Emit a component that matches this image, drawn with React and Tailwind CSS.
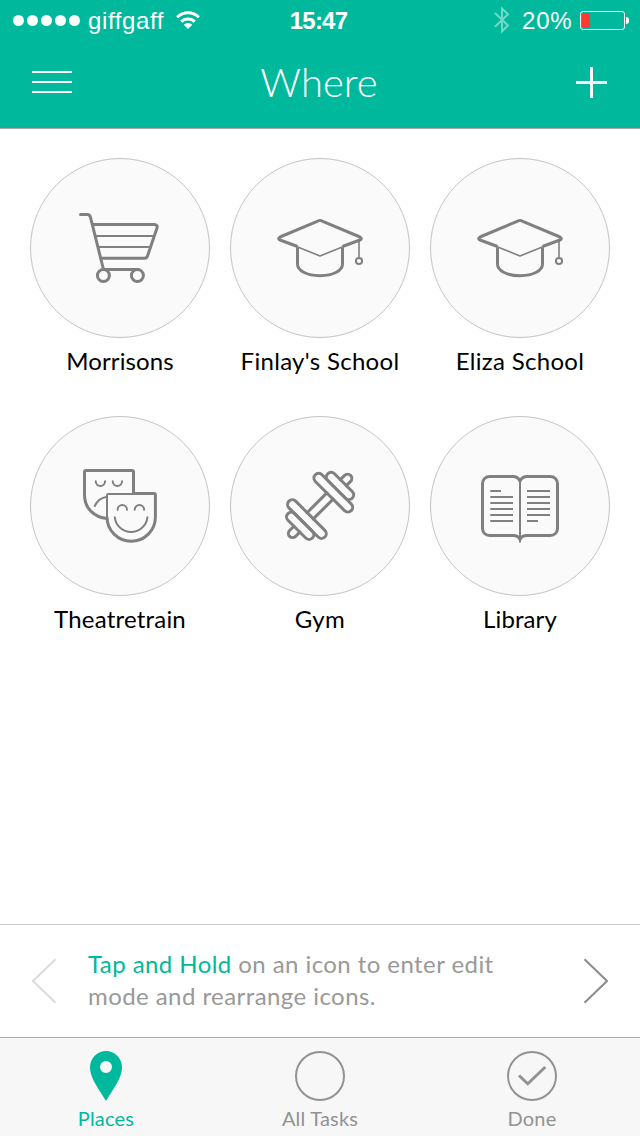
const places = [
	{ name: "Morrisons", icon: CartIcon, spacing: "tracking-[0.1px]" },
	{ name: "Finlay's School", icon: CapIcon, spacing: "tracking-[0.3px]" },
	{ name: "Eliza School", icon: CapIcon, spacing: "tracking-[0.3px]" },
	{ name: "Theatretrain", icon: MasksIcon, spacing: "tracking-[0.2px]" },
	{ name: "Gym", icon: DumbbellIcon, spacing: "tracking-[0.4px]" },
	{ name: "Library", icon: BookIcon, spacing: "tracking-[0.1px]" },
];

export default function App() {
	return (
		<div className="w-[640px] h-[1136px] flex flex-col overflow-hidden bg-white font-['Lato',sans-serif]">
			<header className="h-[129px] shrink-0 bg-[#00b99c] border-b border-[#a7aaa9] text-white">
				<StatusBar/>
				<NavBar/>
			</header>
			<main className="flex-1 px-[30px] pt-[29px]">
				<div className="grid grid-cols-3 gap-x-5">
					{places.map(place => <Place key={place.name} {...place}/>)}
				</div>
			</main>
			<Tip/>
			<TabBar/>
		</div>
	);
}

function StatusBar() {
	return (
		<div className="h-10 grid grid-cols-3 items-center pl-[13px] pr-[11px] font-['Liberation_Sans',sans-serif] text-2xl leading-10 whitespace-nowrap">
			<div className="flex items-center">
				<div className="flex gap-[3px]">
					{[1, 2, 3, 4, 5].map(n => <span key={n} className="size-[11px] rounded-full bg-white"/>)}
				</div>
				<span className="ml-[8px] w-[76px] pt-0.5 leading-[38px] tracking-[0.6px]">giffgaff</span>
				<svg className="ml-3 size-6" viewBox="0 0 24 24" fill="none" stroke="#fff" strokeWidth="3">
					<path d="M1.200 9.200a15.400 15.400 0 0 1 21.600 0"/>
					<path d="M5.200 13.700a9.800 9.800 0 0 1 13.600 0"/>
					<path d="M12 21l-4.300-4.300a6.200 6.200 0 0 1 8.600 0z" fill="#fff" stroke="none"/>
				</svg>
			</div>
			<span className="pr-[5px] pt-0.5 leading-[38px] text-center font-bold tracking-[-0.8px]">15:47</span>
			<div className="flex items-center justify-end">
				<svg className="w-4 h-7" viewBox="0 0 16 28" fill="none" stroke="#fff" strokeOpacity="0.45" strokeWidth="2">
					<path d="M1 7l13 12.500-6 5.800V2.500l6 5.800L1 20.800"/>
				</svg>
				<span className="ml-3 w-[51px] pt-0.5 leading-[38px] tracking-[0.8px]">20%</span>
				<div className="ml-[7px] w-[45px] h-[19px] p-px border border-white rounded-[3px]">
					<div className="w-[8px] h-full bg-[#ff3b30] rounded-l-[1px]"/>
				</div>
				<span className="ml-px w-[3px] h-[7px] rounded-r-full bg-white"/>
			</div>
		</div>
	);
}

function NavBar() {
	return (
		<div className="h-[88px] px-8 grid grid-cols-3 items-center">
			<button className="w-10 flex flex-col gap-2 -mt-1">
				<span className="h-0.5 bg-white"/>
				<span className="h-0.5 bg-white"/>
				<span className="h-0.5 bg-white"/>
			</button>
			<h1 className="pr-0.5 text-center text-[40px] leading-[44px] font-light -mt-1">Where</h1>
			<svg className="justify-self-end mr-px -mt-[3px] size-[31px]" viewBox="0 0 31 31" stroke="#fff" strokeWidth="3">
				<path d="M0 15.500h31M15.500 0v31"/>
			</svg>
		</div>
	);
}

function Place({ name, icon: Icon, spacing }) {
	return (
		<div className="h-[258px] flex flex-col items-center">
			<div className="size-[180px] rounded-full border border-[#c4c4c4] bg-[#fafafa]">
				<Icon/>
			</div>
			<span className={`mt-[7px] text-2xl leading-8 text-black whitespace-nowrap ${spacing}`}>{name}</span>
		</div>
	);
}

function PlaceSvg({ children }) {
	return (
		<svg
			className="-m-px size-[180px]"
			viewBox="0 0 180 180"
			fill="none"
			stroke="#808080"
			strokeWidth="3"
			strokeLinecap="round"
			strokeLinejoin="round"
		>
			{children}
		</svg>
	);
}

function CartIcon() {
	return (
		<PlaceSvg>
			<path d="M50.500 56.500h7c1.700 0 2.500 1 3 2.900l13 52.100h34.800"/>
			<path d="M62.500 66.500h62c2 0 3.200 1.500 2.500 3.400l-9.400 27.900c-.6 1.800-1.300 2.500-3 2.500H71"/>
			<path d="M66 78h58M68.700 89h51.500" strokeWidth="2"/>
			<circle cx="73.400" cy="117.500" r="6" fill="#fafafa"/>
			<circle cx="107.400" cy="117.500" r="6" fill="#fafafa"/>
		</PlaceSvg>
	);
}

function CapIcon() {
	return (
		<PlaceSvg>
			<path d="M67.500 89.500v16.500c0 6.500 9 11.700 22.500 11.700s22.500-5.200 22.500-11.700V89.500" strokeLinecap="butt"/>
			<path d="M67.500 88.500L50 82c-1.700-.7-1.700-2.200 0-3l39-16.400q1-.4 2 0L130 79c1.700.8 1.700 2.300 0 3l-17.500 6.500" strokeLinecap="butt"/>
			<path d="M66.500 88.500L90 98l23.500-9.500M129 83v16.500" strokeWidth="1.600" strokeLinecap="butt"/>
			<circle cx="129" cy="103" r="3.100" strokeWidth="2"/>
		</PlaceSvg>
	);
}

function MasksIcon() {
	return (
		<PlaceSvg>
			<path d="M103.500 77V55.800q0-1.300-1.400-1.300H56q-1.500 0-1.500 1.500V79c0 13.500 10 22.300 22.500 23.600" strokeLinecap="butt"/>
			<path d="M65.700 65.300a4.700 4.700 0 0 0 9.400 0M82.700 65.300a4.700 4.700 0 0 0 9.400 0M64.700 90c2.300-5 7-8.500 12.300-9.300" strokeWidth="2"/>
			<path d="M104 77.500h20q1.400 0 1.400 1.400V101a24.200 24.200 0 0 1-48.400 0" strokeLinecap="butt"/>
			<path d="M105 78H78.200q-1.200 0-1.200 1.200V102" strokeWidth="2"/>
			<path d="M87.600 93.700a4.700 4.700 0 0 1 9.400 0M104.700 93.700a4.700 4.700 0 0 1 9.400 0M84.800 101.300a16.400 16.400 0 0 0 32.600 0" strokeWidth="2"/>
		</PlaceSvg>
	);
}

function DumbbellIcon() {
	return (
		<PlaceSvg>
			<g transform="translate(90.100 89.900) rotate(-45)">
				<path d="M-14 -4.400h28M-14 4.400h28"/>
				<path d="M32.900 -4.200h6a4.200 4.200 0 0 1 0 8.400h-6M-32.900 -4.200h-6a4.200 4.200 0 0 0 0 8.400h6"/>
				<rect x="23.400" y="-17.300" width="9.500" height="34.600" rx="4.750"/>
				<rect x="-32.900" y="-17.300" width="9.500" height="34.600" rx="4.750"/>
				<rect x="13.900" y="-25.400" width="9.500" height="50.800" rx="4.750"/>
				<rect x="-23.400" y="-25.400" width="9.500" height="50.800" rx="4.750"/>
			</g>
		</PlaceSvg>
	);
}

function BookIcon() {
	return (
		<PlaceSvg>
			<path d="M90 65c-1.500-3-3.500-4.500-7-4.500H59.500a7 7 0 0 0-7 7v45a7 7 0 0 0 7 7H83c3.500 0 6 1.500 7 4 1-2.500 3.500-4 7-4h23.500a7 7 0 0 0 7-7v-45a7 7 0 0 0-7-7H97c-3.500 0-5.500 1.500-7 4.500z"/>
			<path d="M90 64v62.500" strokeWidth="2" strokeLinecap="butt"/>
			<path
				d="M60.300 75h10.700M60.300 81H83M60.300 87H83M60.300 93H83M60.300 99H83M60.300 105H83M97 75h23M97 81h23M97 87h23M97 93h23M97 99h23M97 105h11"
				strokeWidth="2"
				strokeLinecap="butt"
			/>
		</PlaceSvg>
	);
}

function Tip() {
	return (
		<section className="h-[113px] shrink-0 px-8 border-t border-[#c8c8c8] flex items-center">
			<svg className="w-6 h-[46px]" viewBox="0 0 24 46" fill="none" stroke="#dcdcdc" strokeWidth="2">
				<path d="M23.500 1.300L1 23l22.500 21.700"/>
			</svg>
			<p className="ml-8 flex-1 pb-0.5 text-2xl leading-8 tracking-[0.43px] text-[#999] whitespace-nowrap">
				<span className="text-[#00b99c]">Tap and Hold</span> on an icon to enter edit
				<br/>
				mode and rearrange icons.
			</p>
			<svg className="w-6 h-[46px]" viewBox="0 0 24 46" fill="none" stroke="#8c8c8c" strokeWidth="2">
				<path d="M.5 1.300L23 23 .5 44.700"/>
			</svg>
		</section>
	);
}

function TabBar() {
	return (
		<nav className="h-[99px] shrink-0 pt-[13px] border-t border-[#acacac] bg-[#f7f7f7] text-[#929292] text-xl leading-6 grid grid-cols-[212px_216px_208px]">
			<div className="flex flex-col items-center text-[#00b99c]">
				<svg className="w-8 h-[50px]" viewBox="0 0 32 50" fill="currentColor" fillRule="evenodd">
					<path d="M16 50C10.500 40 0 28 0 16.500a16 16.500 0 0 1 32 0C32 28 21.500 40 16 50zM16 10a6 6 0 1 0 0 12 6 6 0 0 0 0-12z"/>
				</svg>
				<span className="mt-[5px] tracking-[0.2px]">Places</span>
			</div>
			<div className="flex flex-col items-center">
				<span className="size-[50px] rounded-full border-2 border-[#929292]"/>
				<span className="mt-[5px] tracking-[0.2px]">All Tasks</span>
			</div>
			<div className="flex flex-col items-center">
				<svg className="size-[50px]" viewBox="0 0 50 50" fill="none" stroke="#929292">
					<circle cx="25" cy="25" r="24" strokeWidth="2"/>
					<path d="M12 24.500l8.800 8.300L38.300 16" strokeWidth="3"/>
				</svg>
				<span className="mt-[5px] tracking-[0.2px]">Done</span>
			</div>
		</nav>
	);
}
